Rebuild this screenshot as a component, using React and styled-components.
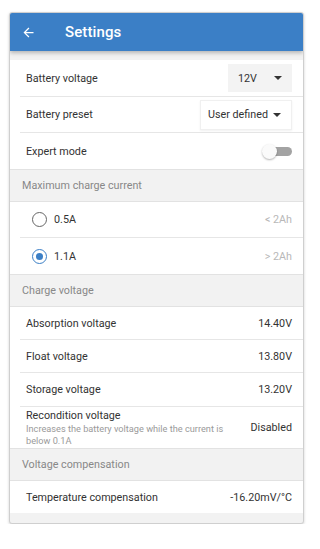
import React from 'react';
import styled, { createGlobalStyle } from 'styled-components';

const GlobalStyle = createGlobalStyle`
  body {
    margin: 0;
    background: #fff;
    font-family: Roboto, "Liberation Sans", sans-serif;
  }
`;

const App = () => {
  return (
    <>
      <GlobalStyle />
      <Frame>
        <Header>
          <BackArrow viewBox="0 0 24 24">
            <path d="M20 11H7.83l5.59-5.59L12 4l-8 8 8 8 1.41-1.41L7.83 13H20v-2z" />
          </BackArrow>
          <Title>Settings</Title>
        </Header>
        <Content>
          <List>
            <Row h={37}>
              <Label>Battery voltage</Label>
              <Select gray w={64} h={28}>
                <span>12V</span>
                <Caret />
              </Select>
            </Row>
            <Row h={36}>
              <Label>Battery preset</Label>
              <Select w={92} h={30}>
                <span>User defined</span>
                <Caret />
              </Select>
            </Row>
            <Row h={36} last>
              <Label>Expert mode</Label>
              <Toggle>
                <Track />
                <Thumb />
              </Toggle>
            </Row>
          </List>
          <Section>Maximum charge current</Section>
          <List>
            <Row h={36}>
              <RadioLabel>
                <Radio />
                <Label>0.5A</Label>
              </RadioLabel>
              <Hint>&lt; 2Ah</Hint>
            </Row>
            <Row h={36} last>
              <RadioLabel>
                <Radio checked />
                <Label>1.1A</Label>
              </RadioLabel>
              <Hint>&gt; 2Ah</Hint>
            </Row>
          </List>
          <Section>Charge voltage</Section>
          <List>
            <Row h={33}>
              <Label>Absorption voltage</Label>
              <Value>14.40V</Value>
            </Row>
            <Row h={33}>
              <Label>Float voltage</Label>
              <Value>13.80V</Value>
            </Row>
            <Row h={34}>
              <Label>Storage voltage</Label>
              <Value>13.20V</Value>
            </Row>
            <Row h={41} last>
              <TwoLine>
                <Label>Recondition voltage</Label>
                <Sub>Increases the battery voltage while the current is below 0.1A</Sub>
              </TwoLine>
              <Value>Disabled</Value>
            </Row>
          </List>
          <Section>Voltage compensation</Section>
          <List>
            <Row h={32} last>
              <Label>Temperature compensation</Label>
              <Value>-16.20mV/°C</Value>
            </Row>
          </List>
        </Content>
      </Frame>
    </>
  );
};

export default App;

const Frame = styled.div`
  margin: 12px 0 0 9px;
  width: 295px;
  box-sizing: border-box;
  border: 1px solid #cfcfcf;
  border-radius: 3px;
  background: #f2f2f2;
  box-shadow: 0 1px 3px rgba(0, 0, 0, 0.18);
  overflow: hidden;
`;

const Header = styled.div`
  position: relative;
  z-index: 1;
  height: 38px;
  background: #3b7fc6;
  display: flex;
  align-items: center;
  padding-left: 11px;
  box-shadow: 0 2px 4px rgba(0, 0, 0, 0.25);
`;

const BackArrow = styled.svg`
  width: 15px;
  height: 15px;
  fill: #fff;
`;

const Title = styled.div`
  color: #fff;
  font-size: 15px;
  font-weight: 500;
  margin-left: 29px;
  letter-spacing: 0.1px;
`;

const Content = styled.div`
  padding: 9px 0 10px;
`;

const List = styled.div`
  background: #fff;
`;

const Row = styled.div`
  box-sizing: border-box;
  height: ${(p) => p.h}px;
  margin-left: 10px;
  padding: 0 11px 0 6px;
  display: flex;
  align-items: center;
  justify-content: space-between;
  border-bottom: ${(p) => (p.last ? 'none' : '1px solid #e6e6e6')};
`;

const Label = styled.div`
  color: #333;
  font-size: 10.75px;
`;

const Value = styled.div`
  color: #333;
  font-size: 10.75px;
`;

const Hint = styled.div`
  color: #b8b8b8;
  font-size: 10.75px;
`;

const Section = styled.div`
  box-sizing: border-box;
  height: 33px;
  display: flex;
  align-items: center;
  padding-left: 12px;
  background: #f2f2f2;
  color: #888;
  font-size: 10.75px;
  border-top: 1px solid #e2e2e2;
  border-bottom: 1px solid #e2e2e2;
`;

const Select = styled.div`
  box-sizing: border-box;
  width: ${(p) => p.w}px;
  height: ${(p) => p.h}px;
  display: flex;
  align-items: center;
  justify-content: space-between;
  padding: 0 10px 0 ${(p) => (p.gray ? 10 : 7)}px;
  background: ${(p) => (p.gray ? '#f3f3f3' : '#fff')};
  border: ${(p) => (p.gray ? 'none' : '1px solid #f0f0f0')};
  box-shadow: ${(p) => (p.gray ? 'none' : '0 1px 2px rgba(0,0,0,0.06)')};
  color: #333;
  font-size: 10.75px;
`;

const Caret = styled.span`
  width: 0;
  height: 0;
  border-left: 4px solid transparent;
  border-right: 4px solid transparent;
  border-top: 4px solid #333;
`;

const Toggle = styled.div`
  position: relative;
  width: 30px;
  height: 15px;
`;

const Track = styled.div`
  position: absolute;
  right: 0;
  top: 3px;
  width: 24px;
  height: 9px;
  border-radius: 5px;
  background: #a3a3a3;
`;

const Thumb = styled.div`
  position: absolute;
  left: 0;
  top: 0;
  width: 15px;
  height: 15px;
  border-radius: 50%;
  background: #fafafa;
  box-shadow: 0 1px 2px rgba(0, 0, 0, 0.3);
`;

const RadioLabel = styled.div`
  display: flex;
  align-items: center;
  gap: 7px;
  padding-left: 6px;
`;

const Radio = styled.span`
  box-sizing: border-box;
  width: 15px;
  height: 15px;
  border-radius: 50%;
  border: 1.5px solid ${(p) => (p.checked ? '#3b7fc6' : '#666')};
  display: flex;
  align-items: center;
  justify-content: center;

  &::after {
    content: '';
    width: 7px;
    height: 7px;
    border-radius: 50%;
    background: ${(p) => (p.checked ? '#3b7fc6' : 'transparent')};
  }
`;

const TwoLine = styled.div`
  display: flex;
  flex-direction: column;
  gap: 1px;
  width: 210px;
`;

const Sub = styled.div`
  color: #9a9a9a;
  font-size: 9.2px;
  line-height: 12px;
`;
